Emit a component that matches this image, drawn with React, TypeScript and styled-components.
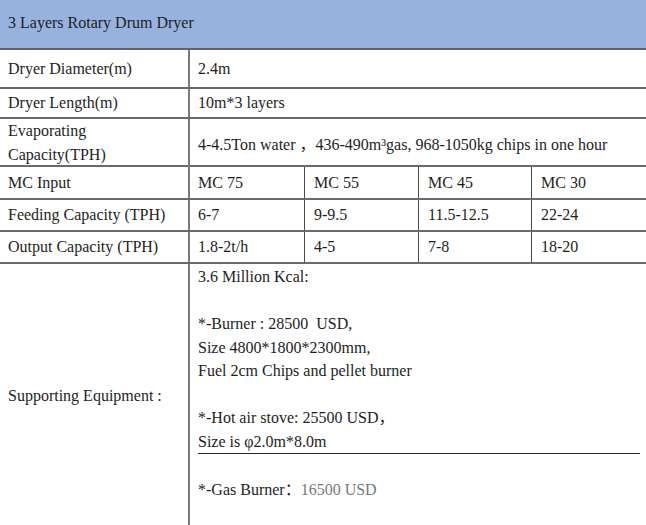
import styled, { createGlobalStyle } from 'styled-components';

const GlobalStyle = createGlobalStyle`
    html, body {
        margin: 0;
        padding: 0;
        background: #ffffff;
    }
    body {
        font-family: "Liberation Serif", "Noto Sans CJK SC", serif;
        font-size: 16px;
        color: #1e1e1e;
        overflow: hidden;
    }
`;

const Sheet = styled.div`
    width: 646px;
    display: flex;
    flex-direction: column;
`;

const TitleBar = styled.div`
    height: 48px;
    background: #95b3de;
    border-bottom: 2px solid #5f6670;
    display: flex;
    align-items: center;
    padding-left: 8px;
    padding-bottom: 2px;
    box-sizing: border-box;
    height: 50px;
`;

const Row = styled.div<{ $h: number; $split?: boolean }>`
    display: grid;
    grid-template-columns: ${(p) => (p.$split ? '190px 114px 114px 113px 1fr' : '190px 1fr')};
    height: ${(p) => p.$h}px;
    border-bottom: 2px solid #6a6a6a;
`;

const Label = styled.div<{ $top?: boolean }>`
    border-right: 2px solid #7a7a7a;
    padding-left: 8px;
    display: flex;
    align-items: ${(p) => (p.$top ? 'flex-start' : 'center')};
    line-height: 24px;
    overflow: visible;
`;

const Value = styled.div<{ $first?: boolean }>`
    padding-left: ${(p) => (p.$first ? '8px' : '9px')};
    border-left: ${(p) => (p.$first ? 'none' : '1px solid #4a4a4a')};
    display: flex;
    align-items: center;
    white-space: nowrap;
`;

const SupportRow = styled.div`
    display: grid;
    grid-template-columns: 190px 1fr;
    height: 264px;
`;

const Notes = styled.div`
    padding: 1px 6px 0 8px;
    line-height: 23.5px;
    white-space: pre;
`;

const NoteLine = styled.div<{ $rule?: boolean }>`
    min-height: 23.5px;
    border-bottom: ${(p) => (p.$rule ? '1px solid #2a2a2a' : 'none')};
`;

const Muted = styled.span`
    color: #787878;
`;

const mcRows = [
    { label: 'MC Input', h: 31, cells: ['MC 75', 'MC 55', 'MC 45', 'MC 30'] },
    { label: 'Feeding Capacity (TPH)', h: 30, cells: ['6-7', '9-9.5', '11.5-12.5', '22-24'] },
    { label: 'Output Capacity (TPH)', h: 30, cells: ['1.8-2t/h', '4-5', '7-8', '18-20'] },
];

const App = () => {
    return (
        <>
            <GlobalStyle />
            <Sheet>
                <TitleBar>3 Layers Rotary Drum Dryer</TitleBar>

                <Row $h={37}>
                    <Label>Dryer Diameter(m)</Label>
                    <Value $first>2.4m</Value>
                </Row>
                <Row $h={28}>
                    <Label>Dryer Length(m)</Label>
                    <Value $first>10m*3 layers</Value>
                </Row>
                <Row $h={46}>
                    <Label $top>Evaporating<br />Capacity(TPH)</Label>
                    <Value $first>4-4.5Ton water ，436-490m³gas, 968-1050kg chips in one hour</Value>
                </Row>

                {mcRows.map((r) => (
                    <Row key={r.label} $h={r.h} $split>
                        <Label>{r.label}</Label>
                        {r.cells.map((c, i) => (
                            <Value key={c} $first={i === 0}>{c}</Value>
                        ))}
                    </Row>
                ))}

                <SupportRow>
                    <Label>Supporting Equipment :</Label>
                    <Notes>
                        <NoteLine>3.6 Million Kcal:</NoteLine>
                        <NoteLine />
                        <NoteLine>*-Burner : 28500  USD,</NoteLine>
                        <NoteLine>Size 4800*1800*2300mm,</NoteLine>
                        <NoteLine>Fuel 2cm Chips and pellet burner</NoteLine>
                        <NoteLine />
                        <NoteLine>*-Hot air stove: 25500 USD，</NoteLine>
                        <NoteLine $rule>Size is φ2.0m*8.0m</NoteLine>
                        <NoteLine />
                        <NoteLine>*-Gas Burner：<Muted>16500 USD</Muted></NoteLine>
                    </Notes>
                </SupportRow>
            </Sheet>
        </>
    );
};

export default App;
